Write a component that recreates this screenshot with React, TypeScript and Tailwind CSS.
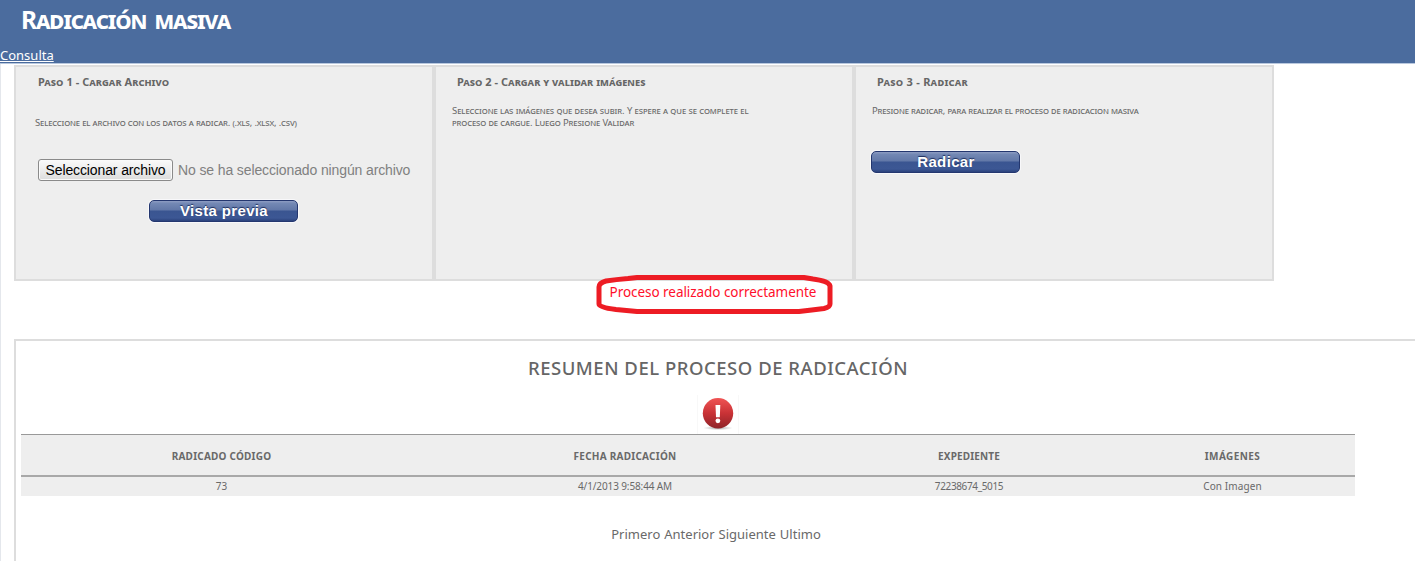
import type { ReactNode } from 'react';

const columns = [
  { label: 'RADICADO CÓDIGO', spacing: 'tracking-[0.22px]' },
  { label: 'FECHA RADICACIÓN', spacing: 'tracking-[0.25px]' },
  { label: 'EXPEDIENTE', spacing: 'tracking-[0.15px]' },
  { label: 'IMÁGENES', spacing: 'tracking-[0.4px]' },
];

const rows = [
  [
    { value: '73', spacing: 'tracking-normal' },
    { value: '4/1/2013 9:58:44 AM', spacing: 'tracking-[-0.12px]' },
    { value: '72238674_5015', spacing: 'tracking-[-0.36px]' },
    { value: 'Con Imagen', spacing: 'tracking-[0.1px]' },
  ],
];

function BlueButton({ label }: { label: string }) {
  return (
    <button className="flex h-6 w-[151px] items-center justify-center rounded-[6px] border border-[#f8f8fa] bg-white font-[Liberation_Sans,sans-serif]">
      <span className="flex h-[22px] w-[149px] items-center justify-center rounded-[5px] border border-[#24376f] bg-[linear-gradient(#8e9dc3_0%,#7388b4_12%,#6278a8_45%,#3a5591_50%,#3c5794_85%,#2b427c_100%)] pl-px text-[15px] leading-5 font-bold tracking-[0.35px] text-white [text-shadow:0_-1px_1px_#1b2c5c]">
        {label}
      </span>
    </button>
  );
}

function Panel({ title, titleClass, children }: { title: string; titleClass: string; children: ReactNode }) {
  return (
    <section className="h-[216px] w-[420px] border-2 border-[#dddddd] bg-[#eeeeee] pt-[7px]">
      <h2 className={`text-[11px] leading-4 font-bold text-[#666666] [font-variant:small-caps] ${titleClass}`}>{title}</h2>
      {children}
    </section>
  );
}

function AlertIcon() {
  return (
    <svg width="42" height="40" viewBox="0 0 42 40" className="block">
      <defs>
        <linearGradient id="alert" x1="0" y1="0" x2="0" y2="1">
          <stop offset="0" stopColor="#f05454" />
          <stop offset="0.5" stopColor="#c93236" />
          <stop offset="1" stopColor="#8e2328" />
        </linearGradient>
        <radialGradient id="shadow">
          <stop offset="0" stopColor="#777" stopOpacity="0.7" />
          <stop offset="1" stopColor="#999" stopOpacity="0" />
        </radialGradient>
      </defs>
      <path d="M0.5 0V39M41.5 0V39" stroke="#f8f8f8" />
      <ellipse cx="21" cy="33" rx="15" ry="2.2" fill="url(#shadow)" />
      <circle cx="21" cy="18.3" r="15.2" fill="url(#alert)" />
      <path d="M18.5 10h4.800l-.5 12.300h-3.800z" fill="#fff" />
      <circle cx="20.9" cy="25.8" r="2.4" fill="#fff" />
    </svg>
  );
}

export default function App() {
  return (
    <div className="h-[561px] w-[1415px] overflow-hidden bg-white font-[Noto_Sans,sans-serif] text-[#696969]">
      <header className="h-16 border-b border-[#b9c8de] bg-[#4b6c9e] pt-0.5 text-white">
        <h1 className="pl-[21px] text-[24.5px] leading-9 font-bold tracking-[-1.15px] [font-variant:small-caps] [word-spacing:3px]">Radicación masiva</h1>
        <a className="mt-[8px] block text-[13px] leading-[19px] underline">Consulta</a>
      </header>
      <main className="h-[497px] border-l border-[#e4e7ec] pt-px pl-[13px]">
        <div className="flex">
          <Panel title="Paso 1 - Cargar Archivo" titleClass="pl-[22px] tracking-[0.05px]">
            <p className="mt-[27px] pl-[19px] text-[9.5px] leading-3 tracking-[-0.16px] [font-variant:small-caps]">
              Seleccione el archivo con los datos a radicar. (.xls, .xlsx, .csv)
            </p>
            <div className="mt-[30px] flex items-center pl-[22px] font-[Liberation_Sans,sans-serif] text-[14px]">
              <button className="h-[22px] w-[135px] rounded-[3px] border border-[#8a8a8a] bg-[linear-gradient(#fafafa,#eeeeee_45%,#dcdcdc)] leading-5 tracking-[-0.12px] text-black shadow-[inset_0_0_0_1px_#fafafa]">
                Seleccionar archivo
              </button>
              <span className="ml-[5px] tracking-[-0.12px] text-[#808080]">No se ha seleccionado ningún archivo</span>
            </div>
            <div className="mt-[18px] pl-[132px]">
              <BlueButton label="Vista previa" />
            </div>
          </Panel>
          <Panel title="Paso 2 - Cargar y validar imágenes" titleClass="pl-[21px] tracking-[0.03px]">
            <p className="mt-[15px] pl-4 text-[9.5px] leading-3 [font-variant:small-caps]">
              <span className="tracking-[-0.08px]">Seleccione las imágenes que desea subir. Y espere a que se complete el</span>
              <br />
              <span className="tracking-[-0.12px]">proceso de cargue. Luego Presione Validar</span>
            </p>
          </Panel>
          <Panel title="Paso 3 - Radicar" titleClass="pl-[21px] tracking-[0.27px]">
            <p className="mt-[15px] pl-4 text-[9.5px] leading-3 tracking-[-0.17px] [font-variant:small-caps]">
              Presione radicar, para realizar el proceso de radicacion masiva
            </p>
            <div className="mt-[33px] pl-[14px]">
              <BlueButton label="Radicar" />
            </div>
          </Panel>
        </div>
        <div className="flex h-[58px] w-[1398px] justify-center pt-0.5 text-[13.5px] leading-[18px] tracking-[-0.05px] text-[#ff0f2b]">
          <div className="relative h-[18px]">
            Proceso realizado correctamente
            <svg className="absolute top-[-10px] left-[-16px]" width="242" height="44" viewBox="0 0 242 44" fill="none">
              <path
                d="M34 5.500L43 4.500H210L219 6Q235 8 236 13V31Q236 34 230 35.500Q218 37 205 38.500H43L22 36.500Q5 34.500 5 31V14Q5 10 12 8Q22 6.500 34 5.500Z"
                stroke="#ed1c24"
                strokeWidth="5"
                strokeLinejoin="round"
              />
            </svg>
          </div>
        </div>
        <section className="h-[222px] w-[1401px] border-t-2 border-l-2 border-[#dddddd] pt-[15px] pl-[5px]">
          <h2 className="w-[1394px] text-center text-[18.5px] leading-6 font-medium tracking-[0.52px] text-[#666666]">
            RESUMEN DEL PROCESO DE RADICACIÓN
          </h2>
          <div className="flex h-[54px] w-[1394px] justify-center pt-[15px]">
            <AlertIcon />
          </div>
          <div className="w-[1334px] bg-[#eeeeee] text-[10px]">
            <div className="grid h-[43px] grid-cols-[401px_406px_282px_245px] items-center border-t border-b-2 border-t-[#999999] border-b-[#a8a8a8] pt-[2px] text-center font-bold">
              {columns.map((c) => (
                <div key={c.label} className={c.spacing}>{c.label}</div>
              ))}
            </div>
            {rows.map((row) => (
              <div key={row[0].value} className="grid h-[19px] grid-cols-[401px_406px_282px_245px] text-center leading-[19px]">
                {row.map((cell) => (
                  <div key={cell.value} className={cell.spacing}>{cell.value}</div>
                ))}
              </div>
            ))}
          </div>
          <nav className="mt-[29px] flex w-[1390px] justify-center gap-1 text-[13px] leading-[18px]">
            <a>Primero</a>
            <a>Anterior</a>
            <a>Siguiente</a>
            <a>Ultimo</a>
          </nav>
        </section>
      </main>
    </div>
  );
}
